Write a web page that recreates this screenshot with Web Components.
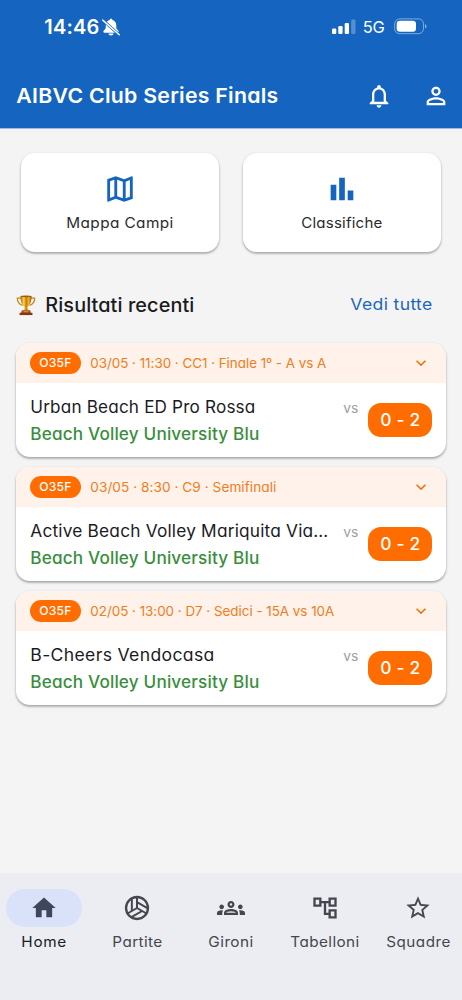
<!DOCTYPE html>
<html lang="it">
<head>
<meta charset="utf-8">
<title>AIBVC Club Series Finals</title>
<style>
html,body{margin:0;height:100%;overflow:hidden}
body{font-family:Inter,"Open Sans",sans-serif;color:#1b1b1f;background:#f4f4f4}
</style>
</head>
<body>
<club-app></club-app>
<script>
const ICONS = {
  bell:'<path d="M12 22c1.1 0 2-.9 2-2h-4c0 1.1.9 2 2 2zm6-6v-5c0-3.07-1.63-5.64-4.5-6.32V4c0-.83-.67-1.5-1.5-1.5s-1.5.67-1.5 1.5v.68C7.64 5.36 6 7.92 6 11v5l-2 2v1h16v-1l-2-2zm-2 1H8v-6c0-2.48 1.51-4.5 4-4.5s4 2.02 4 4.5v6z"/>',
  person:'<path d="M12 5.9a2.1 2.1 0 1 1 0 4.2 2.1 2.1 0 0 1 0-4.2m0 9c2.97 0 6.1 1.46 6.1 2.1v1.1H5.9V17c0-.64 3.13-2.1 6.1-2.1M12 4C9.79 4 8 5.79 8 8s1.79 4 4 4 4-1.79 4-4-1.79-4-4-4zm0 9c-2.67 0-8 1.34-8 4v3h16v-3c0-2.66-5.33-4-8-4z"/>',
  map:'<path d="M20.5 3l-.16.03L15 5.1 9 3 3.36 4.9c-.21.07-.36.25-.36.48V20.5c0 .28.22.5.5.5l.16-.03L9 18.9l6 2.1 5.64-1.9c.21-.07.36-.25.36-.48V3.500c0-.28-.22-.5-.5-.5zM10 5.470l4 1.400v11.660l-4-1.400V5.470zM5 6.460l3-1.010v11.700l-3 1.160V6.460zm14 11.080l-3 1.010V6.860l3-1.160v11.840z"/>',
  chart:'<path d="M4 9h4v11H4zM10 4h4v16h-4zM16 13h4v7h-4z"/>',
  home:'<path d="M10 20v-6h4v6h5v-8h3L12 3 2 12h3v8z"/>',
  ball:'<g fill="none" stroke="currentColor" stroke-width="1.7"><circle cx="12" cy="12" r="9.4" stroke-width="2"/><path d="M12 12V3M7.600 3.900V14.500"/><path transform="rotate(120 12 12)" d="M12 12V3M7.600 3.900V14.500"/><path transform="rotate(240 12 12)" d="M12 12V3M7.600 3.900V14.500"/></g>',
  groups:'<path d="M4 13c1.100 0 2-.9 2-2s-.9-2-2-2-2 .9-2 2 .9 2 2 2zm1.130 1.100C4.760 14.040 4.390 14 4 14c-.99 0-1.930.21-2.780.58C.48 14.900 0 15.620 0 16.430V18h4.500v-1.610c0-.83.23-1.610.63-2.290zM20 13c1.100 0 2-.9 2-2s-.9-2-2-2-2 .9-2 2 .9 2 2 2zm4 3.430c0-.81-.48-1.530-1.220-1.850C21.930 14.210 20.990 14 20 14c-.39 0-.76.04-1.130.1.4.68.63 1.460.63 2.290V18H24v-1.570zM16.240 13.650C15.070 13.130 13.630 12.750 12 12.750s-3.070.39-4.240.9C6.680 14.130 6 15.210 6 16.390V18h12v-1.610c0-1.180-.68-2.260-1.760-2.740zM8.070 16c.09-.23.13-.39.91-.69.97-.38 1.990-.56 3.020-.56s2.050.18 3.020.56c.77.3.81.46.91.69H8.070zM12 8c.55 0 1 .45 1 1s-.45 1-1 1-1-.45-1-1 .45-1 1-1m0-2c-1.660 0-3 1.340-3 3s1.340 3 3 3 3-1.340 3-3-1.340-3-3-3z"/>',
  tree:'<path d="M22 11V3h-7v3H9V3H2v8h7V8h2v10h4v3h7v-8h-7v3h-2V8h2v3h7zM7 9H4V5h3v4zm10 6h3v4h-3v-4zm0-10h3v4h-3V5z"/>',
  star:'<path d="M22 9.240l-7.190-.62L12 2 9.190 8.630 2 9.240l5.460 4.730L5.820 21 12 17.270 18.180 21l-1.630-7.030L22 9.240zM12 15.400l-3.760 2.270 1-4.280-3.320-2.880 4.380-.38L12 6.100l1.710 4.040 4.380.38-3.320 2.880 1 4.280L12 15.400z"/>',
  down:'<path d="M16.590 8.590L12 13.170 7.410 8.590 6 10l6 6 6-6z"/>',
  muted:'<path d="M12 1c-1.100 0-1.800.7-1.900 1.500C6.800 3.400 5 6.200 5 9.500v3.600c0 1.700-3.200 3.300-3.200 5.200 0 .8.500 1.200 1.300 1.200h17.800c.8 0 1.300-.4 1.300-1.200 0-1.900-3.200-3.500-3.200-5.200V9.500c0-3.300-1.800-6.100-5.100-7C13.800 1.700 13.100 1 12 1zM8.500 20.700c.3 1.500 1.700 2.600 3.500 2.600s3.200-1.100 3.500-2.600z"/><path d="M1.500 3L23 22.500" stroke="#1565c0" stroke-width="3.800"/><path d="M1 2.800L23 22.300" stroke="currentColor" stroke-width="1.900" stroke-linecap="round"/>',
  trophy:'<defs><linearGradient id="g"><stop offset="0" stop-color="#a8660c"/><stop offset=".3" stop-color="#ffd34a"/><stop offset=".52" stop-color="#c47c08"/><stop offset=".75" stop-color="#f2b42c"/><stop offset="1" stop-color="#8e5207"/></linearGradient></defs><g fill="none" stroke="#c58517" stroke-width="1.300"><path d="M6.500 4.500H2.500c0 4 2 6.500 5.500 8M17.500 4.500h4c0 4-2 6.500-5.500 8"/></g><path fill="url(#g)" d="M6 2.200h12c0 5.500-1.300 10.300-4.500 12.100 0 1.700.5 2.700 1.700 3.700H8.800c1.200-1 1.700-2 1.700-3.700C7.300 12.500 6 7.700 6 2.200z"/><ellipse cx="12" cy="2.500" rx="6" ry="1" fill="#9c5d0c"/><path fill="#a8501c" d="M7.500 17.800h9l1 3h-11z"/><path fill="#d08a2c" d="M9.500 18.500h5v1.500h-5z"/><path fill="#7c3a16" d="M5 20.500h14v2.500H5z"/>'
};

function define(name, html, setup) {
  const t = document.createElement('template');
  t.innerHTML = html;
  customElements.define(name, class extends HTMLElement {
    connectedCallback() {
      if (this.shadowRoot) return;
      this.attachShadow({mode:'open'}).append(t.content.cloneNode(true));
      if (setup) setup(this, this.shadowRoot);
    }
  });
}

define('ui-icon', '<style>:host{display:block;flex:none;line-height:0}svg{display:block;fill:currentColor}</style><svg viewBox="0 0 24 24"></svg>', (el, root) => {
  const svg = root.querySelector('svg'), s = el.getAttribute('size') || 28;
  svg.setAttribute('width', s);
  svg.setAttribute('height', s);
  svg.innerHTML = ICONS[el.getAttribute('name')];
});

/* A single line of text, widened and tracked so that it spans the given width.
   cv11 selects the single-storey "a". */
define('fit-text', '<style>:host{display:block;flex:none;white-space:nowrap;font-feature-settings:"cv11"}:host([plain]){font-feature-settings:normal}span{display:inline-block;transform-origin:0 50%}</style><span></span>', (el, root) => {
  const span = root.querySelector('span'), w = +el.getAttribute('w');
  span.textContent = el.getAttribute('text');
  const inner = w - 1;
  const natural = span.getBoundingClientRect().width;
  const scale = el.hasAttribute('plain') ? 1 : 1 + 0.6 * (inner / natural - 1);
  span.style.letterSpacing = (inner / scale - natural) / (span.textContent.length - 1) + 'px';
  span.style.transform = `translateX(.3px) scaleX(${scale})`;
  el.style.width = w + 'px';
});

define('status-bar', `<style>
:host{display:flex;align-items:center;height:53px;padding:0 35px 0 44px;box-sizing:border-box}
.time{font-size:20px;font-weight:600}.net{font-size:16.500px;font-weight:400;margin:1px 8.500px 0 6.500px}
ui-icon{margin-left:2px}.grow{flex:1}
</style><fit-text plain class="time" w="56" text="14:46"></fit-text><ui-icon name="muted" size="18"></ui-icon><span class="grow"></span>
<svg width="24" height="16" fill="#fff"><rect x="0" y="9.500" width="4.300" height="5.500" rx="1.200"/><rect x="6.300" y="7" width="4.300" height="8" rx="1.200"/><rect x="12.700" y="4" width="4.300" height="11" rx="1.200"/><rect x="19.200" y="0.500" width="4.300" height="14.500" rx="1.200" opacity=".28"/></svg>
<fit-text plain class="net" w="23" text="5G"></fit-text>
<svg width="33" height="17" fill="#fff"><rect x=".7" y=".9" width="28.800" height="14.800" rx="5" fill="none" stroke="#fff" stroke-opacity=".45"/><rect x="2.700" y="2.800" width="19.300" height="11" rx="3.300"/><path d="M31 6v4.500q1.500-.8 1.500-2.250T31 6" opacity=".5"/></svg>`);

define('app-header', `<style>
:host{display:block;height:129px;background:#1565c0;color:#fff;flex:none;border-bottom:1px solid #9dbde0;box-sizing:border-box}
.bar{display:flex;align-items:center;height:75px;margin-top:5px;padding:0 12px 0 16px}
.title{font-size:20.500px;font-weight:600;margin-top:-1px}.grow{flex:1}.bell{margin-right:29px}
</style><status-bar></status-bar><div class="bar"><fit-text class="title" w="263" text="AIBVC Club Series Finals"></fit-text><span class="grow"></span><ui-icon class="bell" name="bell"></ui-icon><ui-icon name="person"></ui-icon></div>`);

define('quick-card', `<style>
:host{display:flex;flex-direction:column;align-items:center;box-sizing:border-box;height:99px;padding-top:19px;border-radius:14px;background:#fff;box-shadow:0 1px 3px rgba(0,0,0,.2),0 2px 2px rgba(0,0,0,.17);font-size:14.500px;color:#2b2b30}
ui-icon{color:#1565c0}fit-text{line-height:22px;margin-top:6.500px}
</style><ui-icon size="34"></ui-icon><fit-text></fit-text>`, (el, root) => {
  const fresh = (old, attrs) => { const n = document.createElement(old.localName); for (const k in attrs) n.setAttribute(k, attrs[k]); old.replaceWith(n); };
  fresh(root.querySelector('ui-icon'), {name:el.getAttribute('icon'), size:34});
  fresh(root.querySelector('fit-text'), {w:el.getAttribute('w'), text:el.getAttribute('label')});
});

define('section-head', `<style>
:host{display:flex;align-items:center;height:30px;padding:0 29.500px 0 15px}
.t{font-size:19.500px;font-weight:500;margin-left:7.500px}.more{font-size:16.500px;color:#1b66bd;margin:-2px 0 0 auto}
</style><ui-icon name="trophy" size="22"></ui-icon><fit-text class="t" w="150" text="Risultati recenti"></fit-text><fit-text class="more" w="83" text="Vedi tutte"></fit-text>`);

define('match-card', '', (el, root) => {
  const a = n => el.getAttribute(n);
  root.innerHTML = `<style>
:host{display:block;height:114px;border-radius:14px;overflow:hidden;background:#fff;box-shadow:0 1px 3px rgba(0,0,0,.22),0 2px 2px rgba(0,0,0,.17)}
.head{display:flex;align-items:center;height:40px;padding:0 15.500px 0 14px;box-sizing:border-box;background:#fff2ea;color:#ef7d22;font-size:13.500px}
.tag{display:flex;align-items:center;justify-content:center;width:50.500px;height:21.500px;border-radius:11px;background:#ff6d00;color:#fff;font-size:11.800px;font-weight:500;margin-right:9px}
ui-icon{margin-left:auto;color:#f56f0c}
.body{display:flex;padding:11.500px 14px 0;font-size:16.700px;line-height:26.300px}
.teams{flex:1;min-width:0}.win{color:#388e3c;font-weight:500}
.vs{font-size:14px;color:#9e9e9e;margin:.5px 9.500px 0 0}
.score{display:flex;align-items:center;justify-content:center;width:64px;height:34px;margin-top:8.500px;border-radius:13px;background:#ff6d00;color:#fff;font-size:17px;font-weight:550}
</style><div class="head"><div class="tag"><fit-text w="33" text="O35F"></fit-text></div><fit-text w="${a('mw')}" text="${a('meta')}"></fit-text><ui-icon name="down" size="20"></ui-icon></div>
<div class="body"><div class="teams"><fit-text w="${a('hw')}" text="${a('home')}"></fit-text><fit-text class="win" w="230" text="Beach Volley University Blu"></fit-text></div><fit-text class="vs" w="16" text="vs"></fit-text><div class="score"><fit-text w="41" text="0 - 2"></fit-text></div></div>`;
});

define('nav-item', '', (el, root) => {
  const a = n => el.getAttribute(n);
  root.innerHTML = `<style>
:host{display:flex;flex-direction:column;align-items:center;color:#44474e;font-size:14.200px}
:host([active]) .pill{background:#dae2f9;color:#3e4759}:host([active]) fit-text{color:#1b1b1f}
.pill{display:flex;align-items:center;justify-content:center;width:76px;height:38px;border-radius:19px}
fit-text{line-height:22px;margin-top:4px}
</style><div class="pill"><ui-icon name="${a('icon')}" size="28"></ui-icon></div><fit-text w="${a('w')}" text="${a('label')}"></fit-text>`;
});

define('bottom-nav', `<style>
:host{display:grid;grid-template-columns:repeat(5,93.650px);justify-content:center;height:127.500px;box-sizing:border-box;padding-top:16.500px;background:#ecedf3;flex:none}
</style><nav-item active icon="home" label="Home" w="46"></nav-item><nav-item icon="ball" label="Partite" w="51"></nav-item><nav-item icon="groups" label="Gironi" w="46"></nav-item><nav-item icon="tree" label="Tabelloni" w="70"></nav-item><nav-item icon="star" label="Squadre" w="65"></nav-item>`);

define('club-app', `<style>
:host{display:flex;flex-direction:column;width:462px;height:1000px;background:#f4f4f4;overflow:hidden}
main{flex:1}.quick{display:grid;grid-template-columns:1fr 1fr;gap:24px;padding:23.600px 21px 0}
section-head{margin-top:38.400px}.list{display:grid;gap:10px;padding:23px 16px 0}
</style><app-header></app-header><main>
<div class="quick"><quick-card icon="map" label="Mappa Campi" w="108"></quick-card><quick-card icon="chart" label="Classifiche" w="82"></quick-card></div>
<section-head></section-head>
<div class="list">
<match-card meta="03/05 · 11:30 · CC1 · Finale 1º - A vs A" mw="237" home="Urban Beach ED Pro Rossa" hw="226"></match-card>
<match-card meta="03/05 · 8:30 · C9 · Semifinali" mw="187" home="Active Beach Volley Mariquita Via…" hw="299"></match-card>
<match-card meta="02/05 · 13:00 · D7 · Sedici - 15A vs 10A" mw="245" home="B-Cheers Vendocasa" hw="185"></match-card>
</div></main><bottom-nav></bottom-nav>`);
</script>
</body>
</html>
